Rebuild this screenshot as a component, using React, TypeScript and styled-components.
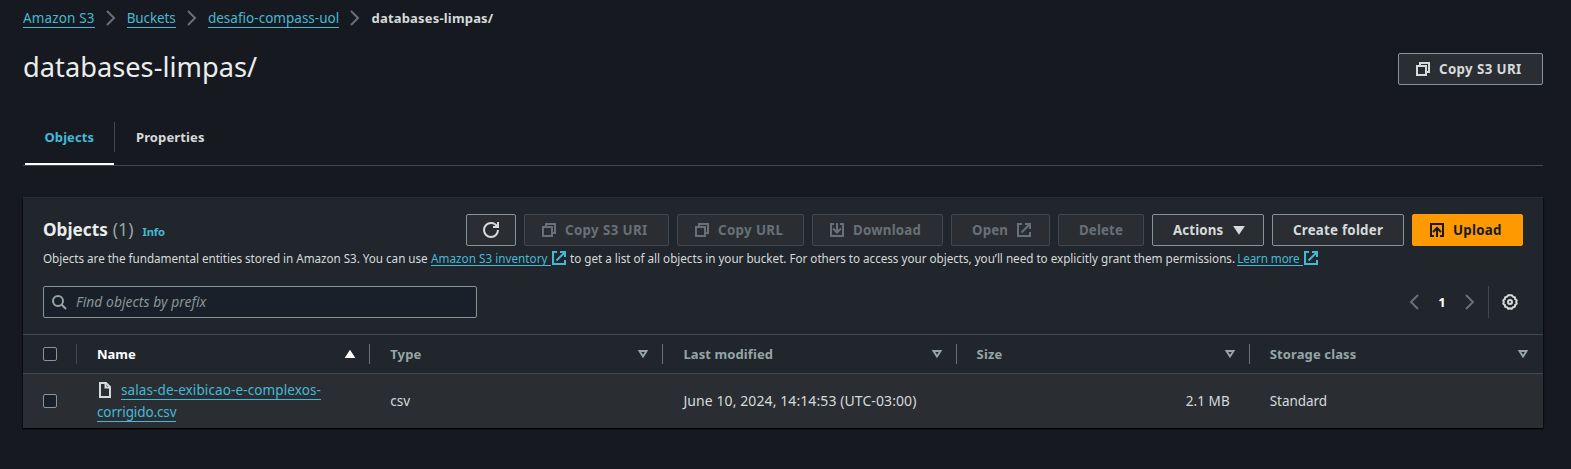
import React from 'react';
import styled, { createGlobalStyle, css } from 'styled-components';

const c = {
  page: '#16191f',
  card: '#21252c',
  raised: '#2a2e33',
  field: '#1a2029',
  line: '#414750',
  border: '#879596',
  muted: '#687078',
  label: '#95a5a6',
  text: '#d5dbdb',
  heading: '#eaeded',
  link: '#44b9d6',
  accent: '#ff9900',
};

const GlobalStyle = createGlobalStyle`
  * { box-sizing: border-box; }
  html, body { margin: 0; background: ${c.page}; }
  body {
    color: ${c.text};
    font: 400 13.5px/22px 'Noto Sans', 'Open Sans', sans-serif;
    overflow: hidden;
  }
`;

/* ---------- text ---------- */
const Tracked = styled.span<{ $t?: number }>`
  letter-spacing: ${p => p.$t ?? 0}px;
  white-space: pre;
`;

const Link = styled.a<{ $t?: number }>`
  color: ${c.link};
  letter-spacing: ${p => p.$t ?? 0}px;
  text-decoration: none;
  background: linear-gradient(${c.link}, ${c.link}) 0 100% / 100% 1px no-repeat;
`;

/* ---------- icons ---------- */
const Svg = styled.svg<{ $color?: string }>`
  display: block;
  flex: none;
  fill: none;
  stroke: ${p => p.$color ?? 'currentColor'};
  stroke-width: 2;
`;

type IconProps = { color?: string; children: React.ReactNode };
const Icon = ({ color, children }: IconProps) => (
  <Svg viewBox="0 0 16 16" width={16} height={16} $color={color}>{children}</Svg>
);
const CopyIcon = () => <Icon><path d="M2 5h9v9H2z" /><path d="M5 5V2h9v9h-3" /></Icon>;
const RefreshIcon = () => (
  <Icon><path d="M15 8c0 3.87-3.13 7-7 7s-7-3.13-7-7 3.13-7 7-7c2.79 0 5.2 1.63 6.33 4" /><path d="M10 5h5V0" /></Icon>
);
const DownloadIcon = () => (
  <Icon><path d="M5 2H2v12h12V2h-3" /><path d="M8 1v9" /><path d="M4 6.500 8 10.500l4-4" /></Icon>
);
const UploadIcon = () => (
  <Icon><path d="M5 14H2V2h12v12h-3" /><path d="M8 15V6" /><path d="m4 10 4-4 4 4" /></Icon>
);
const ExternalIcon = () => (
  <Icon><path d="M14 10v4H2V2h4" /><path d="M9 2h5v5" /><path d="M5.500 10.500 14 2" /></Icon>
);
const SearchIcon = () => <Icon color={c.label}><circle cx="7" cy="7" r="5" /><path d="m15 15-4.500-4.500" /></Icon>;
const FileIcon = () => (
  <Icon><path d="M3 1h6l4 4v10H3z" /><path d="M8.500 1v4.500H13" /></Icon>
);
const GearIcon = () => (
  <Icon>
    <path d="M8 1.300 9.700 1.200 10.900 2.700 12.800 3.200 13.200 5.100 14.700 6.300 14.200 8 14.700 9.700 13.200 10.900 12.800 12.800 10.900 13.300 9.700 14.800 8 14.300 6.300 14.800 5.100 13.300 3.200 12.800 2.800 10.900 1.300 9.700 1.800 8 1.300 6.300 2.800 5.100 3.200 3.200 5.100 2.700 6.300 1.200z" />
    <circle cx="8" cy="8" r="2" />
  </Icon>
);
const ChevronRight = () => <Icon color={c.muted}><path d="m4 1 7 7-7 7" /></Icon>;
const ChevronLeft = () => <Icon color={c.muted}><path d="m12 1-7 7 7 7" /></Icon>;
const CaretDown = () => <Icon><path d="M4 5h8l-4 6z" fill="currentColor" /></Icon>;
const SortNone = () => <Icon><path d="M4.500 5h7L8 10.500z" /></Icon>;
const SortUp = () => <Icon><path d="M4.500 11h7L8 5.500z" fill="currentColor" /></Icon>;

/* ---------- page header ---------- */
const Page = styled.main`
  width: 1571px;
  height: 469px;
  padding: 7px 28px 0 23px;
`;

const Breadcrumbs = styled.nav`
  display: flex;
  align-items: center;
  height: 22px;
`;
const Crumb = styled(Link)<{ $w: number }>`
  width: ${p => p.$w}px;
  height: 20px;
  line-height: 20px;
  white-space: nowrap;
`;
const CrumbSep = styled.span`
  width: 32.2px;
  padding-left: 8px;
`;
const CurrentCrumb = styled(Tracked)`
  font-weight: 700;
  font-size: 13px;
  line-height: 20px;
`;

const TitleRow = styled.header`
  display: flex;
  justify-content: space-between;
  align-items: flex-start;
  padding-top: 20px;
  height: 81px;
`;
const Title = styled.h1`
  margin: 0;
  font: 400 27.2px/36px 'Noto Sans', sans-serif;
  letter-spacing: 0.03px;
  color: ${c.heading};
`;

const Button = styled.button<{ $w: number; $kind?: 'disabled' | 'primary'; $pad?: string }>`
  display: flex;
  align-items: center;
  gap: 8px;
  width: ${p => p.$w}px;
  height: 32px;
  flex: none;
  padding: ${p => p.$pad ?? '0 0 0 16px'};
  border: 1px solid ${c.border};
  border-radius: 2px;
  background: ${c.raised};
  color: ${c.text};
  font: 700 13.3px/20px 'Noto Sans', sans-serif;
  ${p => p.$kind === 'disabled' && css`
    border-color: ${c.line};
    color: ${c.muted};
  `}
  ${p => p.$kind === 'primary' && css`
    border-color: ${c.accent};
    background: ${c.accent};
    color: ${c.page};
  `}
`;
const HeaderAction = styled.div`
  margin-top: 4px;
`;

/* ---------- tabs ---------- */
const Tabs = styled.div`
  display: flex;
  height: 56px;
  border-bottom: 1px solid ${c.line};
`;
const Tab = styled.div<{ $active?: boolean }>`
  display: flex;
  height: 55px;
  padding-top: 12px;
  margin-left: ${p => (p.$active ? 2 : 0)}px;
  color: ${p => (p.$active ? c.link : c.text)};
  border-bottom: 2px solid ${p => (p.$active ? '#fff' : 'transparent')};
  font-weight: 700;
  font-size: 13px;
  line-height: 30px;
`;
const TabText = styled(Tracked)<{ $w: number; $pad: number }>`
  width: ${p => p.$w}px;
  height: 30px;
  padding-left: ${p => p.$pad}px;
`;
const TabDivider = styled.i`
  width: 1px;
  height: 30px;
  margin-top: 12px;
  background: ${c.line};
`;

/* ---------- card ---------- */
const Card = styled.section`
  width: 1520px;
  height: 231px;
  margin-top: 31px;
  background: ${c.card};
  border-top: 1px solid #2a2e33;
  box-shadow: 0 1px 1px 0 rgba(0, 0, 0, 0.7), 1px 1px 1px 0 rgba(0, 0, 0, 0.4), -1px 1px 1px 0 rgba(0, 0, 0, 0.4);
`;
const CardHeader = styled.div`
  display: flex;
  justify-content: space-between;
  height: 48px;
  padding: 16px 20px 0;
`;
const CardTitle = styled.h2`
  display: flex;
  align-items: baseline;
  height: 32px;
  margin: 0;
  font: 700 17.2px/30px 'Noto Sans', sans-serif;
  color: ${c.heading};
`;
const Counter = styled.span`
  margin-left: 5px;
  font-weight: 400;
  font-size: 17.6px;
  color: ${c.label};
`;
const Info = styled.a`
  margin-left: 9px;
  font-size: 11.2px;
  letter-spacing: -0.15px;
  color: ${c.link};
`;
const Actions = styled.div`
  display: flex;
  gap: 8px;
`;
const Description = styled.p`
  display: flex;
  align-items: flex-start;
  margin: 2px 0 0;
  padding-left: 20px;
  height: 20px;
  font-size: 11.7px;
  line-height: 20px;
`;
const Part = styled(Tracked)<{ $w: number }>`
  width: ${p => p.$w}px;
  flex: none;
`;
const ExternalLink = styled(Link)<{ $w: number }>`
  width: ${p => p.$w}px;
  height: 18px;
  line-height: 20px;
  flex: none;
  white-space: nowrap;
`;
const LinkIcon = styled.span`
  width: 16px;
  padding-top: 2px;
  flex: none;
  color: ${c.link};
`;

const Tools = styled.div`
  display: flex;
  justify-content: space-between;
  align-items: center;
  height: 32px;
  margin-top: 18px;
  padding: 0 25px 0 20px;
`;
const SearchField = styled.div`
  display: flex;
  align-items: center;
  gap: 9px;
  width: 434px;
  height: 32px;
  padding-left: 7px;
  border: 1px solid ${c.border};
  border-radius: 2px;
  background: ${c.field};
`;
const Placeholder = styled(Tracked)`
  font-style: italic;
  font-size: 13.8px;
  color: ${c.border};
`;
const Pagination = styled.div`
  display: flex;
  align-items: center;
  height: 32px;
`;
const PageNumber = styled.span`
  width: 40px;
  text-align: center;
  font-weight: 700;
  font-size: 13px;
  color: #fff;
`;
const Preferences = styled.div`
  display: flex;
  align-items: center;
  height: 32px;
  margin-left: 10px;
  padding-left: 13px;
  border-left: 1px solid ${c.line};
`;

/* ---------- table ---------- */
const HeadRow = styled.div`
  display: grid;
  grid-template-columns: 54px repeat(5, 293.2px);
  align-items: center;
  height: 40px;
  margin-top: 16px;
  border: solid ${c.line};
  border-width: 1px 0;
`;
const Row = styled.div`
  display: grid;
  grid-template-columns: 54px repeat(5, 293.2px);
  align-items: center;
  height: 54px;
  background: ${c.raised};
`;
const HeadCell = styled.div<{ $sorted?: boolean; $last?: boolean }>`
  display: flex;
  align-items: center;
  justify-content: space-between;
  height: 20px;
  padding: 0 11px 0 20px;
  border-right: 1px solid ${p => (p.$last ? 'transparent' : c.muted)};
  font-weight: 700;
  font-size: 13px;
  color: ${p => (p.$sorted ? '#fff' : c.label)};
`;
const Cell = styled.div<{ $right?: boolean }>`
  padding: 0 20px;
  text-align: ${p => (p.$right ? 'right' : 'left')};
`;
const CheckCell = styled.div<{ $divided?: boolean }>`
  display: flex;
  align-items: center;
  height: 20px;
  padding-left: 20px;
  border-right: 1px solid ${p => (p.$divided ? c.line : 'transparent')};
`;
const Checkbox = styled.span`
  width: 14px;
  height: 14px;
  border: 1px solid ${c.border};
  border-radius: 2px;
  background: ${c.field};
`;
const NameLine = styled.div`
  display: flex;
  align-items: center;
  height: 22px;
`;
const FileSlot = styled.span`
  width: 24px;
`;
const NameLink = styled(Link)`
  height: 20px;
  line-height: 21px;
`;
const DateText = styled(Tracked)`
  font-size: 14px;
`;

const columns: { label: string; t?: number; sorted?: boolean }[] = [
  { label: 'Name', sorted: true },
  { label: 'Type', t: 0.15 },
  { label: 'Last modified', t: 0.1 },
  { label: 'Size', t: 0.2 },
  { label: 'Storage class', t: 0.12 },
];

export default function App() {
  return (
    <>
      <GlobalStyle />
      <Page>
        <Breadcrumbs>
          <Crumb $w={71.5} $t={0.14}>Amazon S3</Crumb>
          <CrumbSep><ChevronRight /></CrumbSep>
          <Crumb $w={49} $t={-0.11}>Buckets</Crumb>
          <CrumbSep><ChevronRight /></CrumbSep>
          <Crumb $w={131.5} $t={0.02}>desafio-compass-uol</Crumb>
          <CrumbSep><ChevronRight /></CrumbSep>
          <CurrentCrumb $t={0.18}>databases-limpas/</CurrentCrumb>
        </Breadcrumbs>

        <TitleRow>
          <Title>databases-limpas/</Title>
          <HeaderAction>
            <Button $w={145}><CopyIcon /><Tracked $t={0.38}>Copy S3 URI</Tracked></Button>
          </HeaderAction>
        </TitleRow>

        <Tabs>
          <Tab $active><TabText $w={89} $pad={19.5} $t={0.07}>Objects</TabText></Tab>
          <TabDivider />
          <Tab><TabText $w={110} $pad={21} $t={0.12}>Properties</TabText></Tab>
        </Tabs>

        <Card>
          <CardHeader>
            <CardTitle>Objects<Counter>(1)</Counter><Info>Info</Info></CardTitle>
            <Actions>
              <Button $w={50}><RefreshIcon /></Button>
              <Button $w={145} $kind="disabled"><CopyIcon /><Tracked $t={0.38}>Copy S3 URI</Tracked></Button>
              <Button $w={127} $kind="disabled"><CopyIcon /><Tracked $t={0.38}>Copy URL</Tracked></Button>
              <Button $w={131} $kind="disabled"><DownloadIcon /><Tracked $t={0.21}>Download</Tracked></Button>
              <Button $w={99} $kind="disabled" $pad="0 0 0 20px"><Tracked $t={0.16}>Open</Tracked><ExternalIcon /></Button>
              <Button $w={86} $kind="disabled" $pad="0 0 0 20px"><Tracked $t={0.12}>Delete</Tracked></Button>
              <Button $w={112} $pad="0 0 0 20px"><Tracked $t={0.14}>Actions</Tracked><CaretDown /></Button>
              <Button $w={132} $pad="0 0 0 20px"><Tracked $t={0.24}>Create folder</Tracked></Button>
              <Button $w={111} $kind="primary"><UploadIcon /><Tracked $t={0.28}>Upload</Tracked></Button>
            </Actions>
          </CardHeader>

          <Description>
            <Part $w={388} $t={-0.04}>Objects are the fundamental entities stored in Amazon S3. You can use </Part>
            <ExternalLink $w={120} $t={0.03}>Amazon S3 inventory</ExternalLink>
            <LinkIcon><ExternalIcon /></LinkIcon>
            <Part $w={670.2} $t={-0.025}>{' to get a list of all objects in your bucket. For others to access your objects, you’ll need to explicitly grant them permissions. '}</Part>
            <ExternalLink $w={65.8} $t={-0.12}>Learn more</ExternalLink>
            <LinkIcon><ExternalIcon /></LinkIcon>
          </Description>

          <Tools>
            <SearchField><SearchIcon /><Placeholder $t={0.07}>Find objects by prefix</Placeholder></SearchField>
            <Pagination>
              <ChevronLeft />
              <PageNumber>1</PageNumber>
              <ChevronRight />
              <Preferences><GearIcon /></Preferences>
            </Pagination>
          </Tools>

          <HeadRow>
            <CheckCell $divided><Checkbox /></CheckCell>
            {columns.map((col, i) => (
              <HeadCell key={col.label} $sorted={col.sorted} $last={i === columns.length - 1}>
                <Tracked $t={col.t}>{col.label}</Tracked>
                {col.sorted ? <SortUp /> : <SortNone />}
              </HeadCell>
            ))}
          </HeadRow>
          <Row>
            <CheckCell><Checkbox /></CheckCell>
            <Cell>
              <NameLine>
                <FileSlot><FileIcon /></FileSlot>
                <NameLink $t={0.11}>salas-de-exibicao-e-complexos-</NameLink>
              </NameLine>
              <NameLine><NameLink $t={-0.12}>corrigido.csv</NameLink></NameLine>
            </Cell>
            <Cell>csv</Cell>
            <Cell><DateText $t={0.09}>June 10, 2024, 14:14:53 (UTC-03:00)</DateText></Cell>
            <Cell $right><Tracked $t={0.07}>2.1 MB</Tracked></Cell>
            <Cell><Tracked $t={-0.06}>Standard</Tracked></Cell>
          </Row>
        </Card>
      </Page>
    </>
  );
}
